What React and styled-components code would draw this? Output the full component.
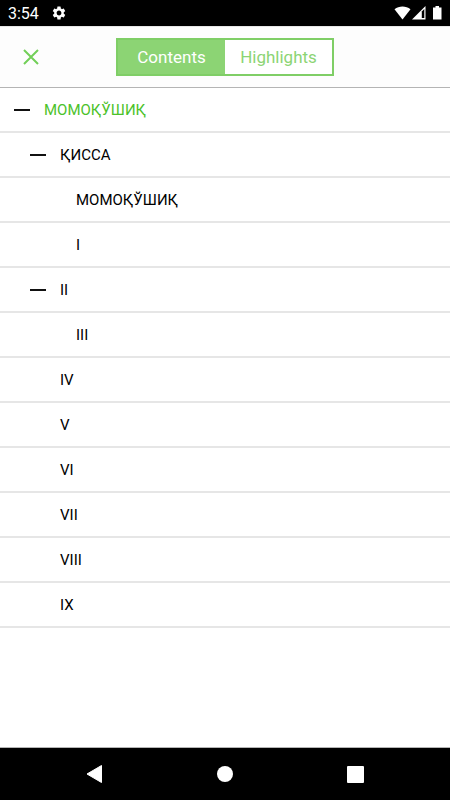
import { useState } from 'react';
import styled, { createGlobalStyle } from 'styled-components';

const chapters = [
  { id: 1, title: 'МОМОҚЎШИҚ', level: 0, open: true },
  { id: 2, title: 'ҚИССА', level: 1, open: true },
  { id: 3, title: 'МОМОҚЎШИҚ', level: 2 },
  { id: 4, title: 'I', level: 2 },
  { id: 5, title: 'II', level: 1, open: true },
  { id: 6, title: 'III', level: 2 },
  { id: 7, title: 'IV', level: 1 },
  { id: 8, title: 'V', level: 1 },
  { id: 9, title: 'VI', level: 1 },
  { id: 10, title: 'VII', level: 1 },
  { id: 11, title: 'VIII', level: 1 },
  { id: 12, title: 'IX', level: 1 },
];

export default function App() {
  const [tab, setTab] = useState('contents');
  const [current, setCurrent] = useState(1);

  return (
    <>
      <GlobalStyle />
      <Screen>
        <StatusBar>
          <Clock>3:54</Clock>
          <svg width="16" height="16" viewBox="0 0 24 24" fill="#fff">
            <path d="M19.14 12.94c.04-.3.06-.61.06-.94 0-.32-.02-.64-.07-.94l2.03-1.58a.49.49 0 0 0 .12-.61l-1.92-3.32a.488.488 0 0 0-.59-.22l-2.39.96c-.5-.38-1.03-.7-1.62-.94l-.36-2.54a.484.484 0 0 0-.48-.41h-3.84c-.24 0-.43.17-.47.41l-.36 2.54c-.59.24-1.13.57-1.62.94l-2.39-.96c-.22-.08-.47 0-.59.22L2.74 8.87c-.12.21-.08.47.12.61l2.03 1.58c-.05.3-.09.63-.09.94s.02.64.07.94l-2.03 1.58a.49.49 0 0 0-.12.61l1.92 3.32c.12.22.37.29.59.22l2.39-.96c.5.38 1.03.7 1.62.94l.36 2.54c.05.24.24.41.48.41h3.84c.24 0 .44-.17.47-.41l.36-2.54c.59-.24 1.13-.56 1.62-.94l2.39.96c.22.08.47 0 .59-.22l1.92-3.32c.12-.22.07-.47-.12-.61l-2.01-1.58zM12 15.6A3.61 3.61 0 0 1 8.4 12c0-1.98 1.62-3.6 3.6-3.6s3.6 1.62 3.6 3.6-1.62 3.6-3.6 3.6z" />
          </svg>
          <Indicators>
            <svg width="48" height="16" viewBox="0 0 48 16" fill="#fff">
              <path d="M0.500 4.200C5 .7 12 .7 16.500 4.200L8.500 14.500z" />
              <path d="M31.500 1v13.500H18z" />
              <path d="M27.800 6.500l2.500-2.500V13H27.800z" fill="#000" />
              <path d="M41.500 1h3.500v1.500h2.500V14.500h-8.500V2.500H41.500z" />
            </svg>
          </Indicators>
        </StatusBar>

        <Header>
          <CloseButton aria-label="Close">
            <svg width="16" height="16" viewBox="0 0 16 16" stroke="#72cf58" strokeWidth="2">
              <path d="M1 1L15 15M15 1L1 15" />
            </svg>
          </CloseButton>
          <Tabs>
            <Tab $active={tab === 'contents'} onClick={() => setTab('contents')}>Contents</Tab>
            <Tab $active={tab === 'highlights'} onClick={() => setTab('highlights')}>Highlights</Tab>
          </Tabs>
        </Header>

        <List>
          {chapters.map(chapter => (
            <Row key={chapter.id} $level={chapter.level}>
              <Toggle>
                {chapter.open && (
                  <ToggleButton aria-label="Collapse">
                    <Dash />
                  </ToggleButton>
                )}
              </Toggle>
              <Title $current={chapter.id === current} onClick={() => setCurrent(chapter.id)}>
                {chapter.title}
              </Title>
            </Row>
          ))}
        </List>

        <NavBar>
          <NavButton aria-label="Back">
            <svg width="18" height="20" viewBox="0 0 18 20" fill="#fff" stroke="#fff" strokeLinejoin="round">
              <path d="M15.500 1.500V18.500L1 10z" />
            </svg>
          </NavButton>
          <NavButton aria-label="Home">
            <svg width="16" height="16" viewBox="0 0 16 16" fill="#fff">
              <circle cx="8" cy="8" r="8" />
            </svg>
          </NavButton>
          <NavButton aria-label="Recent apps">
            <svg width="17" height="17" viewBox="0 0 17 17" fill="#fff">
              <rect width="17" height="17" rx="1" />
            </svg>
          </NavButton>
        </NavBar>
      </Screen>
    </>
  );
}

const GlobalStyle = createGlobalStyle`
  * {
    box-sizing: border-box;
  }

  body {
    margin: 0;
    background-color: #fff;
    font-family: Roboto, 'Noto Sans', sans-serif;
  }

  button {
    padding: 0;
    border: none;
    background: none;
    font-family: inherit;
    cursor: pointer;
  }

  svg {
    display: block;
  }
`;

const Screen = styled.div`
  min-height: 100vh;
  display: flex;
  flex-direction: column;
`;

const StatusBar = styled.div`
  height: 26px;
  padding: 0 8px;
  display: flex;
  align-items: center;
  gap: 12px;
  background-color: #000;
`;

const Clock = styled.span`
  padding-top: 2px;
  color: #fff;
  font-size: 16px;
  line-height: 20px;
`;

const Indicators = styled.div`
  margin-left: auto;
`;

const Header = styled.header`
  height: 62px;
  padding: 0 16px;
  display: grid;
  grid-template-columns: 1fr auto 1fr;
  align-items: center;
  border-top: 1px solid #e6e6e6;
  border-bottom: 1px solid #b4b4b4;
  background-color: #fdfdfd;
`;

const CloseButton = styled.button`
  width: 30px;
  height: 30px;
  display: flex;
  align-items: center;
  justify-content: center;
`;

const Tabs = styled.div`
  display: flex;
  border: 2px solid #7fce66;
`;

const Tab = styled.button`
  height: 34px;
  width: 107px;
  background-color: ${props => props.$active ? '#8cd474' : '#fff'};
  color: ${props => props.$active ? '#fff' : '#8cd474'};
  font-size: 17px;
  line-height: 20px;
`;

const List = styled.ul`
  flex: 1;
  margin: 0;
  padding: 0;
  list-style: none;
`;

const Row = styled.li`
  height: 45px;
  padding-left: ${props => 14 + props.$level * 16}px;
  display: flex;
  align-items: center;
  border-bottom: 2px solid #e6e6e6;
`;

const Toggle = styled.div`
  width: 30px;
`;

const ToggleButton = styled.button`
  height: 24px;
  display: flex;
  align-items: center;
`;

const Dash = styled.span`
  width: 16px;
  height: 2px;
  background-color: #111;
`;

const Title = styled.button`
  color: ${props => props.$current ? '#4cc22a' : '#000'};
  font-size: 15px;
  line-height: 20px;
  text-align: left;
`;

const NavBar = styled.nav`
  height: 53px;
  padding: 0 30px;
  display: flex;
  align-items: center;
  border-top: 1px solid #b4b4b4;
  background-color: #000;
`;

const NavButton = styled.button`
  flex: 1;
  height: 48px;
  display: flex;
  align-items: center;
  justify-content: center;
`;
